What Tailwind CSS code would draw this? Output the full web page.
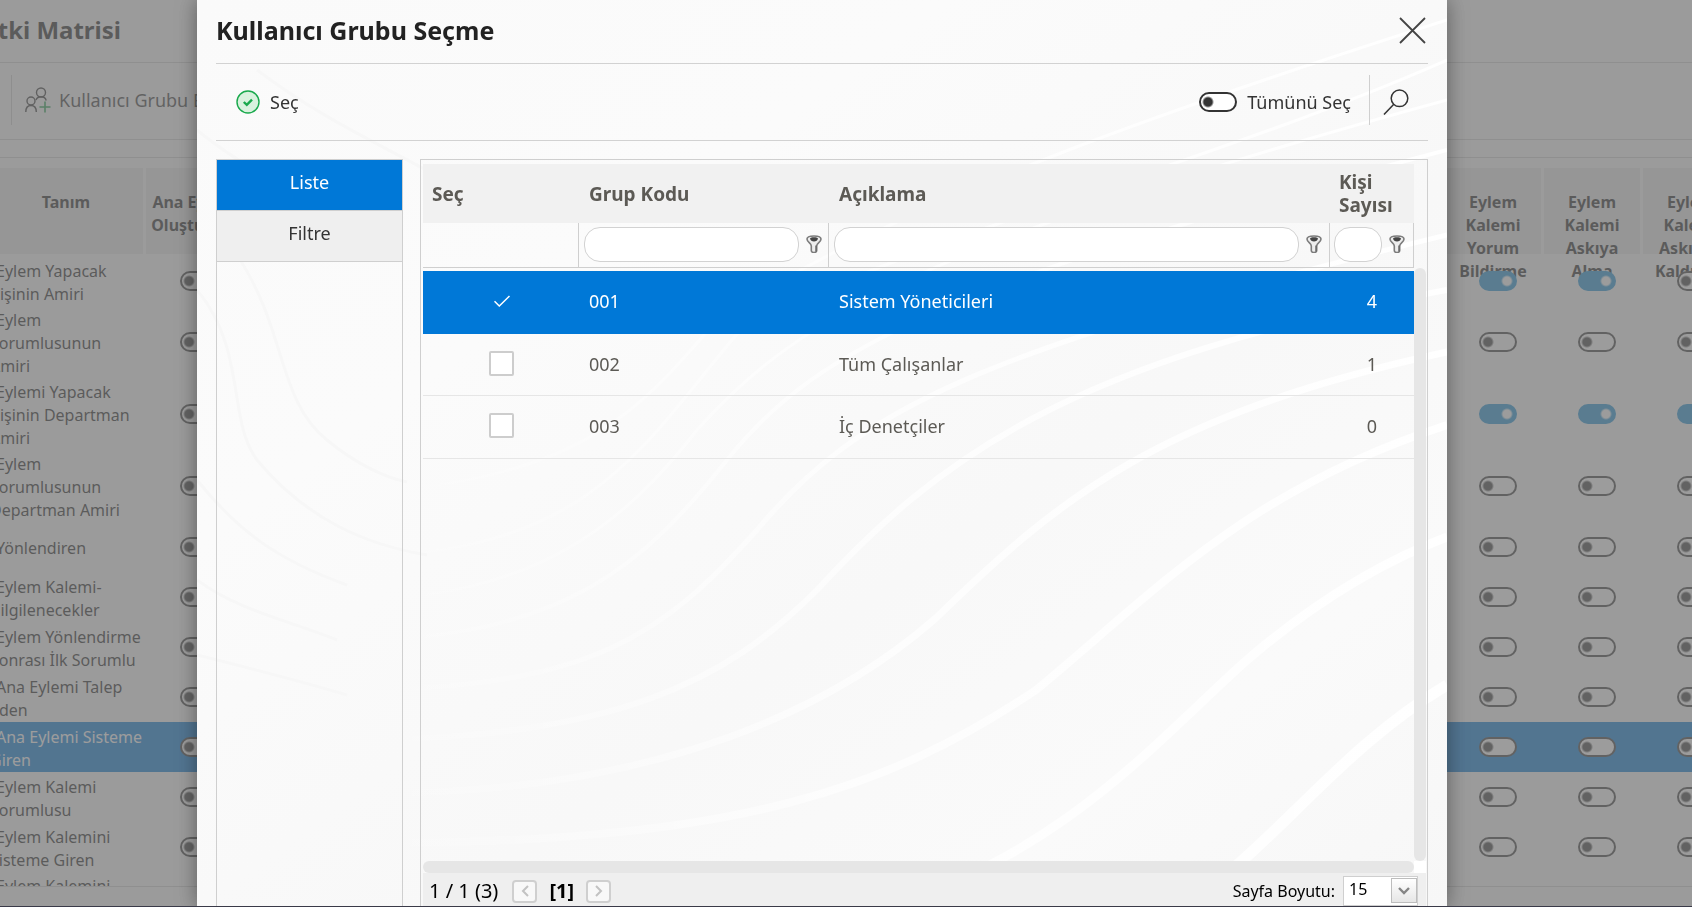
<!DOCTYPE html>
<html lang="tr">
<head>
<meta charset="utf-8">
<meta name="viewport" content="width=device-width, initial-scale=1">
<title>Yetki Matrisi - Kullanıcı Grubu Seçme</title>
<script src="https://cdn.jsdelivr.net/npm/@tailwindcss/browser@4"></script>
</head>
<body class="h-screen overflow-hidden bg-[#fafafa] font-['Noto_Sans','Open_Sans',sans-serif] text-[#222]">

<!-- Page behind the dialog -->
<main class="flex h-screen flex-col overflow-hidden" inert>
  <header class="flex h-[63px] items-center border-b border-[#d2d2d2] pb-[2px]">
    <div class="flex w-[121px] justify-end"><h1 class="shrink-0 whitespace-nowrap text-2xl font-bold">Yetki Matrisi</h1></div>
  </header>
  <div class="flex h-[77px] items-center border-b border-[#d2d2d2] pb-[2px] pl-[11px]">
    <button type="button" class="flex h-[50px] items-center gap-2 border-l border-[#cfcfcf] pl-[13px] text-lg whitespace-nowrap text-[#3a3a3a]">
      <svg class="size-[26px]" viewBox="0 0 26 26" fill="none" stroke="#333" stroke-width="1.4">
        <circle cx="16" cy="5.500" r="4.500"/><circle cx="6" cy="14" r="4"/>
        <path d="M11 13c1-2.500 3-3.200 5-3.200 2.500 0 4.500 1.200 5.200 3.700M.8 25c0-4 2-6.500 5.200-6.500s5.300 2.500 5.300 6.500"/>
        <path d="M20 14.500v11M14.500 20h11" stroke="#1f9d4b" stroke-width="1.600"/>
      </svg>
      <span>Kullanıcı Grubu Ekle</span>
    </button>
  </div>
  <div class="mt-[17px] min-h-0 flex-1 overflow-hidden border-y border-[#d2d2d2] pt-[10px]">
    <table class="w-[calc(100%+50px)] table-fixed border-separate border-spacing-0 text-base leading-[23px]">
      <colgroup><col class="w-[146px]"><col class="w-[99px]"><col><col class="w-[99px]"><col class="w-[99px]"><col class="w-[99px]"></colgroup>
      <thead><tr id="matrix-head"></tr></thead>
      <tbody id="matrix-body"></tbody>
    </table>
  </div>
  <div class="h-5 shrink-0"></div>
</main>

<div class="fixed inset-0 bg-[#737373]/71"></div>

<!-- Dialog -->
<section role="dialog" aria-modal="true" aria-labelledby="dialog-title" class="fixed top-0 right-[245px] bottom-0 left-[197px] flex flex-col overflow-hidden bg-[#fafafa] px-[19px] shadow-[0_0_20px_rgba(0,0,0,0.4)]">
  <svg class="absolute inset-0 -z-10 h-full w-full" viewBox="0 0 1250 907" preserveAspectRatio="none" fill="none" aria-hidden="true">
    <defs>
      <linearGradient id="sheen" x1="0" y1="0" x2="1" y2="1"><stop offset="0" stop-color="#fafafa"/><stop offset=".3" stop-color="#fbfbfb"/><stop offset=".6" stop-color="#f8f8f8"/><stop offset=".8" stop-color="#fafafa"/><stop offset="1" stop-color="#f7f7f7"/></linearGradient>
      <linearGradient id="ray" gradientUnits="userSpaceOnUse" x1="150" y1="0" x2="1250" y2="0"><stop offset="0" stop-color="#fff" stop-opacity="0"/><stop offset=".5" stop-color="#fff" stop-opacity=".7"/><stop offset="1" stop-color="#fff"/></linearGradient>
    </defs>
    <path fill="url(#sheen)" d="M0 0h1250v907H0z"/>
    <g stroke="url(#ray)">
      <path stroke-width="11" d="M985 907C1075 850 1140 750 1250 685"/>
      <path stroke-width="9" d="M692 907C870 850 960 740 1050 660 1120 600 1190 560 1250 537"/>
      <path stroke-width="8" d="M203 843C540 840 690 790 839 690 960 590 1050 490 1250 425"/>
      <path stroke-width="7" d="M203 793C400 790 600 740 739 618 860 500 960 415 1250 352"/>
      <path stroke-width="6" d="M150 740C420 740 530 680 620 590 740 460 870 360 1250 290"/>
      <path stroke-width="5" d="M150 690C400 690 470 630 560 530 660 410 780 350 1250 235"/>
      <path stroke-width="4" d="M150 640C370 640 450 560 530 460 610 360 720 290 1250 150"/>
      <path stroke-width="3" d="M150 600C340 600 430 520 500 430 590 330 700 250 1250 100"/>
      <path stroke-width="3" d="M200 555C400 540 450 440 540 334 700 240 1000 170 1250 60M200 490C400 470 450 400 520 320 700 200 1000 100 1250 20"/>
    </g>
    <g stroke="#f7f7f7" stroke-width="3">
      <path d="M0 290C50 350 30 420 60 460 110 520 170 545 230 555M0 480C40 530 80 560 150 585M40 255C90 330 80 400 130 440 160 465 190 478 210 482M0 580C40 610 90 620 140 640M0 655C60 670 100 680 150 695"/>
      <path d="M60 70C140 130 200 150 300 210M0 130C60 180 110 190 170 260"/>
    </g>
  </svg>

  <header class="flex h-16 shrink-0 items-center justify-between border-b border-[#d2d2d2] pb-[3px]">
    <h2 id="dialog-title" class="text-[25px] leading-8 font-bold">Kullanıcı Grubu Seçme</h2>
    <button type="button" aria-label="Kapat" class="mr-[2px]">
      <svg class="size-[27px]" viewBox="0 0 27 27" stroke="#444" stroke-width="1.800"><path d="M1 1l25 25M26 1L1 26"/></svg>
    </button>
  </header>

  <div class="flex h-[77px] shrink-0 items-center border-b border-[#d2d2d2] text-lg text-[#333]">
    <button type="button" class="ml-5 flex items-center gap-[10px]">
      <svg class="size-6" viewBox="0 0 24 24" fill="none"><circle cx="12" cy="12" r="11" fill="#d9f2de" stroke="#19a94c" stroke-width="1.400"/><path d="M7.800 12l3 2.900 5.200-5.200" stroke="#19a94c" stroke-width="2.400"/></svg>
      <span>Seç</span>
    </button>
    <label class="ml-auto flex items-center gap-[10px]">
      <input type="checkbox" class="h-5 w-[38px] appearance-none rounded-full border-2 border-[#333] bg-[#fff] bg-[radial-gradient(circle_at_7px_8px,#333_4px,transparent_6px)]">
      <span>Tümünü Seç</span>
    </label>
    <div class="mb-1 ml-[18px] h-[50px] border-l border-[#cfcfcf]"></div>
    <button type="button" aria-label="Ara" class="mr-[19px] ml-[13px]">
      <svg class="size-[26px]" viewBox="0 0 26 26" fill="none" stroke="#333" stroke-width="1.500"><circle cx="16.500" cy="9.300" r="8.300"/><path d="M10.800 15.200L1 25.500"/></svg>
    </button>
  </div>

  <div class="mt-[18px] flex min-h-0 flex-1">
    <nav class="w-[187px] shrink-0 border border-[#cfcfcf] text-center text-lg">
      <a href="#liste" aria-current="page" class="block h-[51px] border-b border-[#cfcfcf] bg-[#0078d7] pt-2 text-white">Liste</a>
      <a href="#filtre" class="block h-[51px] border-b border-[#cfcfcf] bg-[#efefef] pt-2 text-[#333]">Filtre</a>
    </nav>

    <div class="ml-[17px] flex min-w-0 flex-1 flex-col border-x border-t border-[#cfcfcf] pt-1 pr-px pl-[2px]">
      <div class="flex min-h-0 flex-1">
        <div class="min-w-0 flex-1">
          <table class="w-full table-fixed border-separate border-spacing-0 text-lg leading-[23px] text-[#5c5a55]">
            <colgroup><col class="w-[156px]"><col class="w-[250px]"><col><col class="w-[84px]"></colgroup>
            <thead>
              <tr class="h-[59px] bg-[#efefef]/90 text-left text-[19px]">
                <th class="pt-[2px] pl-[9px]">Seç</th>
                <th class="pt-[2px] pl-[10px]">Grup Kodu</th>
                <th class="pt-[2px] pl-[10px]">Açıklama</th>
                <th class="pt-px pl-[9px]">Kişi<br>Sayısı</th>
              </tr>
              <tr class="h-[45px]">
                <td class="border-r border-b border-[#cfcfcf]"></td>
                <td class="border-r border-b border-[#cfcfcf] pr-[6px] pb-[2px] pl-[5px]">
                  <div class="flex items-center gap-[7px]"><input type="text" aria-label="Grup Kodu filtresi" class="h-[35px] min-w-0 flex-1 rounded-2xl border border-[#d2d2d2] bg-white px-3"><button type="button" aria-label="Grup Kodu filtre seçenekleri"><svg class="h-[18px] w-4"><use href="#funnel"/></svg></button></div>
                </td>
                <td class="border-r border-b border-[#cfcfcf] pr-[7px] pb-[2px] pl-[5px]">
                  <div class="flex items-center gap-[7px]"><input type="text" aria-label="Açıklama filtresi" class="h-[35px] min-w-0 flex-1 rounded-2xl border border-[#d2d2d2] bg-white px-3"><button type="button" aria-label="Açıklama filtre seçenekleri"><svg class="h-[18px] w-4"><use href="#funnel"/></svg></button></div>
                </td>
                <td class="border-r border-b border-[#cfcfcf] pr-2 pb-[2px] pl-1">
                  <div class="flex items-center gap-[7px]"><input type="text" aria-label="Kişi Sayısı filtresi" class="h-[35px] min-w-0 flex-1 rounded-2xl border border-[#d2d2d2] bg-white px-3"><button type="button" aria-label="Kişi Sayısı filtre seçenekleri"><svg class="h-[18px] w-4"><use href="#funnel"/></svg></button></div>
                </td>
              </tr>
            </thead>
            <tbody>
              <tr class="h-[3px]"><td colspan="4"></td></tr>
              <tr class="h-[63px] bg-[#0078d7] text-white">
                <td class="pb-[3px] pl-[66px]">
                  <label class="flex size-[25px] items-center justify-center"><input type="checkbox" checked aria-label="001 seç" class="absolute size-[25px] appearance-none"><svg class="h-3 w-4" viewBox="0 0 16 12" fill="none" stroke="#fff" stroke-width="1.500"><path d="M.5 6.200L5.300 11 15.500 1"/></svg></label>
                </td>
                <td class="pb-[2px] pl-[10px]">001</td><td class="pb-[2px] pl-[10px]">Sistem Yöneticileri</td><td class="pr-[37px] pb-[2px] text-right">4</td>
              </tr>
              <tr class="h-[62px]">
                <td class="border-b border-[#e6e6e6] pb-[2px] pl-[66px]"><input type="checkbox" aria-label="002 seç" class="block size-[25px] appearance-none rounded-xs border-2 border-[#cdcdcd] bg-white"></td>
                <td class="border-b border-[#e6e6e6] pl-[10px]">002</td><td class="border-b border-[#e6e6e6] pl-[10px]">Tüm Çalışanlar</td><td class="border-b border-[#e6e6e6] pr-[37px] text-right">1</td>
              </tr>
              <tr class="h-[63px]">
                <td class="border-b border-[#e6e6e6] pb-[3px] pl-[66px]"><input type="checkbox" aria-label="003 seç" class="block size-[25px] appearance-none rounded-xs border-2 border-[#cdcdcd] bg-white"></td>
                <td class="border-b border-[#e6e6e6] pb-[2px] pl-[10px]">003</td><td class="border-b border-[#e6e6e6] pb-[2px] pl-[10px]">İç Denetçiler</td><td class="border-b border-[#e6e6e6] pr-[37px] pb-[2px] text-right">0</td>
              </tr>
            </tbody>
          </table>
        </div>
        <div class="mt-[104px] w-3 rounded-md bg-[#e6e6e6]"></div>
      </div>
      <div class="flex h-3 shrink-0"><div class="flex-1 rounded-md bg-[#e6e6e6]"></div><div class="w-3 bg-white"></div></div>
      <footer class="flex h-[34px] shrink-0 items-center bg-[#efefef] pt-[2px] pr-2 pl-[6px] text-black">
        <span class="text-xl leading-6">1 / 1 (3)</span>
        <button type="button" disabled aria-label="Önceki sayfa" class="ml-[14px] flex h-[23px] w-[25px] items-center justify-center rounded-sm border-2 border-[#cfcfcf] bg-[#f8f8f8]"><svg class="h-3 w-2" viewBox="0 0 8 12" fill="none" stroke="#c2c2c2" stroke-width="2"><path d="M7 1L2 6l5 5"/></svg></button>
        <span class="mx-[12px] text-xl leading-6 font-bold">[1]</span>
        <button type="button" disabled aria-label="Sonraki sayfa" class="flex h-[23px] w-[25px] items-center justify-center rounded-sm border-2 border-[#cfcfcf] bg-[#f8f8f8]"><svg class="h-3 w-2" viewBox="0 0 8 12" fill="none" stroke="#c2c2c2" stroke-width="2"><path d="M1 1l5 5-5 5"/></svg></button>
        <label for="page-size" class="mr-2 ml-auto text-base">Sayfa Boyutu:</label>
        <div class="relative">
          <select id="page-size" class="block h-[30px] w-[75px] appearance-none border border-[#cfcfcf] bg-white pb-1 pl-[5px] text-base leading-5"><option>15</option></select>
          <span class="pointer-events-none absolute top-[2px] right-px flex h-[25px] w-[26px] items-center justify-center border border-[#bdbdbd] bg-linear-to-b from-white to-[#e6e6e6]"><svg class="h-2 w-3" viewBox="0 0 12 8" fill="none" stroke="#858585" stroke-width="2.400"><path d="M1 1l5 5 5-5"/></svg></span>
        </div>
      </footer>
    </div>
  </div>
</section>

<div class="fixed inset-x-0 bottom-0 h-px bg-[#3a3a48]"></div>

<svg class="hidden" aria-hidden="true">
  <symbol id="funnel" viewBox="0 0 16 18">
    <path d="M1 4C1 2 4 1 8 1s7 1 7 3c0 3.200-4.300 4-4.300 7v4.500c0 1.300-1 2-2.700 2s-2.700-.7-2.700-2V11C5.300 8 1 7.200 1 4z" fill="#ededed" stroke="#7c7c7c" stroke-width="1.600"/>
    <path d="M4 3.600C4.600 2.600 6 2.200 8 2.200s3.400.4 4 1.400C11.700 5.600 10 6.600 8 6.600S4.300 5.600 4 3.600z" fill="#444"/>
    <path d="M10 10.500v6" stroke="#666" stroke-width="1.400"/>
  </symbol>
</svg>

<script>
const heads = ['Tanım', 'Ana Eylem Oluşturma', '', 'Eylem Kalemi Yorum Bildirme', 'Eylem Kalemi Askıya Alma', 'Eylem Kalemi Askıdan Kaldırma'];
const headPad = ['pr-[11px]', ''];
document.getElementById('matrix-head').innerHTML = heads.map((h, i) =>
  `<th class="h-[88px] border-r-[3px] border-b-2 border-[#fafafa] bg-[#ebebeb] bg-clip-padding p-0 pt-[23px] align-top ${headPad[i] || ''}"><div class="h-[40px]">${h}</div></th>`).join('');

const rows = [
  { text: ['Eylem Yapacak', 'Kişinin Amiri'], on: [1, 1, 0] },
  { text: ['Eylem', 'Sorumlusunun', 'Amiri'], tall: true },
  { text: ['Eylemi Yapacak', 'Kişinin Departman', 'Amiri'], tall: true, on: [1, 1, 1] },
  { text: ['Eylem', 'Sorumlusunun', 'Departman Amiri'], tall: true },
  { text: ['Yönlendiren'] },
  { text: ['Eylem Kalemi-', 'Bilgilenecekler'] },
  { text: ['Eylem Yönlendirme', 'Sonrası İlk Sorumlu'] },
  { text: ['Ana Eylemi Talep', 'Eden'] },
  { text: ['Ana Eylemi Sisteme', 'Giren'], selected: true },
  { text: ['Eylem Kalemi', 'Sorumlusu'] },
  { text: ['Eylem Kalemini', 'Sisteme Giren'] },
  { text: ['Eylem Kalemini'], top: true },
];
const toggle = (label, on) => `<td class="p-0 pl-[7px] text-center leading-none"><input type="checkbox" aria-label="${label}" ${on ? 'checked' : ''} class="relative inline-block h-5 w-[38px] appearance-none rounded-full border-2 border-[#3a3a3a] bg-[#fdfdfd] bg-[radial-gradient(circle_at_7px_8px,#3a3a3a_4px,transparent_6px)] align-middle checked:border-[#1c91d6] checked:bg-[#1c91d6] checked:bg-[radial-gradient(circle_at_26px_8px,#ffffff_4px,transparent_6px)]"></td>`;
document.getElementById('matrix-body').innerHTML = rows.map(r => {
  const on = r.on || [0, 0, 0];
  return `<tr class="${r.tall ? 'h-[72px]' : 'h-[50px]'} ${r.selected ? 'bg-[#0078d7] text-white' : ''}">
    <td class="p-0 pt-[3px] ${r.top ? 'align-top' : ''}"><div class="-ml-[10px] indent-[6px] whitespace-nowrap">${r.text.map((t, i) => `<div class="${i ? 'indent-0' : ''}">${t}</div>`).join('')}</div></td>
    ${toggle(heads[1], 0)}<td></td>${on.map((o, i) => toggle(heads[i + 3], o)).join('')}</tr>`;
}).join('');
</script>
</body>
</html>
